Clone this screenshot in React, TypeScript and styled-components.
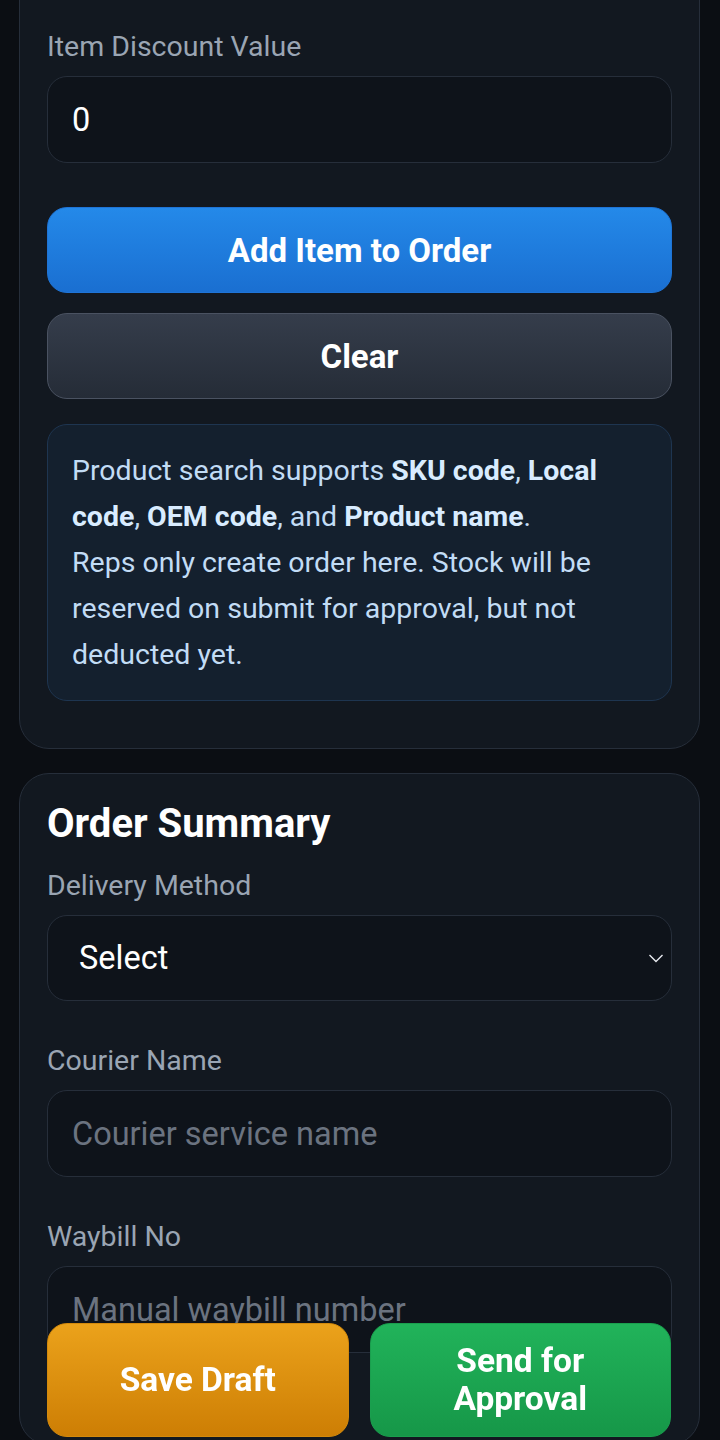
import * as React from "react";
import styled, { createGlobalStyle } from "styled-components";

const GlobalStyle = createGlobalStyle`
  html, body {
    margin:0;
    padding:0;
    background:#0b0e13;
    font-family: Roboto, "Noto Sans", "Liberation Sans", sans-serif;
  }
  * { box-sizing:border-box; }
`;

const Page = styled.div`
  display:flex;
  flex-direction:column;
  gap:24px;
  padding:0 20px 160px 19px;
  margin-top:-40px;
`;

const Card = styled.section<{ $top?: number }>`
  display:flex;
  flex-direction:column;
  background:#121820;
  border:1px solid #262e3a;
  border-radius:30px;
  padding:${(p) => p.$top ?? 27}px 27px 47px 27px;
`;

const Title = styled.h2`
  margin:0 0 23px 0;
  font-size:40px;
  line-height:46px;
  font-weight:700;
  color:#ffffff;
`;

const Field = styled.div`
  display:flex;
  flex-direction:column;
  gap:13px;
  margin-bottom:44px;
`;

const Label = styled.label`
  font-size:28.5px;
  line-height:32px;
  color:#9aa5b3;
`;

const Input = styled.input`
  width:100%;
  height:87px;
  background:#0e131a;
  border:1px solid #262e3a;
  border-radius:20px;
  padding:0 24px;
  font-family:inherit;
  font-size:32.5px;
  color:#ffffff;
  outline:none;

  &::placeholder{
    color:#6b7380;
  }
`;

const SelectWrap = styled.div`
  position:relative;
`;

const Select = styled.select`
  width:100%;
  height:86px;
  appearance:none;
  background:#0e131a;
  border:1px solid #262e3a;
  border-radius:20px;
  padding:0 31px;
  font-family:inherit;
  font-size:32.5px;
  color:#ffffff;
  outline:none;
`;

const Chevron = styled.svg`
  position:absolute;
  right:8px;
  top:50%;
  transform:translateY(-50%);
  pointer-events:none;
`;

const Button = styled.button<{ $variant: "blue" | "gray" }>`
  width:100%;
  height:86px;
  border-radius:20px;
  font-family:inherit;
  font-size:33px;
  font-weight:700;
  color:#ffffff;
  cursor:pointer;
  margin-bottom:20px;
  background:${(p) =>
    p.$variant === "blue"
      ? "linear-gradient(180deg,#2489e9 0%,#1a6fd1 100%)"
      : "linear-gradient(180deg,#353d4b 0%,#252c37 100%)"};
  border:1px solid ${(p) => (p.$variant === "blue" ? "#1f74d6" : "#4a5261")};
`;

const Info = styled.div`
  margin-top:5px;
  background:#14202e;
  border:1px solid #1e3550;
  border-radius:20px;
  padding:23px 24px 22px 24px;
  font-size:28.5px;
  line-height:46px;
  color:#c2dcf5;

  b{
    font-weight:700;
    color:#d9ecff;
  }
`;

const BottomBar = styled.div`
  position:fixed;
  left:47px;
  right:49px;
  bottom:3px;
  display:grid;
  grid-template-columns:1fr 1fr;
  gap:21px;
`;

const ActionButton = styled.button<{ $tone: "orange" | "green" }>`
  height:114px;
  border-radius:20px;
  padding:0 30px;
  font-family:inherit;
  font-size:33.5px;
  line-height:38px;
  font-weight:700;
  color:#ffffff;
  border:1px solid ${(p) => (p.$tone === "orange" ? "#d48a0c" : "#1a9f4e")};
  background:${(p) =>
    p.$tone === "orange"
      ? "linear-gradient(180deg,#eba21b 0%,#cd7e04 100%)"
      : "linear-gradient(180deg,#21b35a 0%,#169748 100%)"};
`;

const App = () => (
  <>
    <GlobalStyle />
    <Page>
      <Card $top={70}>
        <Field>
          <Label>Item Discount Value</Label>
          <Input defaultValue="0" />
        </Field>
        <Button $variant="blue">Add Item to Order</Button>
        <Button $variant="gray">Clear</Button>
        <Info>
          Product search supports <b>SKU code</b>, <b>Local code</b>, <b>OEM code</b>, and{" "}
          <b>Product name</b>.
          <br />
          Reps only create order here. Stock will be reserved on submit for approval, but not
          deducted yet.
        </Info>
      </Card>

      <Card>
        <Title>Order Summary</Title>
        <Field>
          <Label>Delivery Method</Label>
          <SelectWrap>
            <Select defaultValue="">
              <option value="">Select</option>
            </Select>
            <Chevron width="16" height="10" viewBox="0 0 16 10">
              <path d="M1.5 2 L8 8.5 L14.5 2" fill="none" stroke="#e6e9ee" strokeWidth="1.4" />
            </Chevron>
          </SelectWrap>
        </Field>
        <Field>
          <Label>Courier Name</Label>
          <Input placeholder="Courier service name" />
        </Field>
        <Field>
          <Label>Waybill No</Label>
          <Input placeholder="Manual waybill number" />
        </Field>
      </Card>
    </Page>
    <BottomBar>
      <ActionButton $tone="orange">Save Draft</ActionButton>
      <ActionButton $tone="green">Send for Approval</ActionButton>
    </BottomBar>
  </>
);

export default App;
